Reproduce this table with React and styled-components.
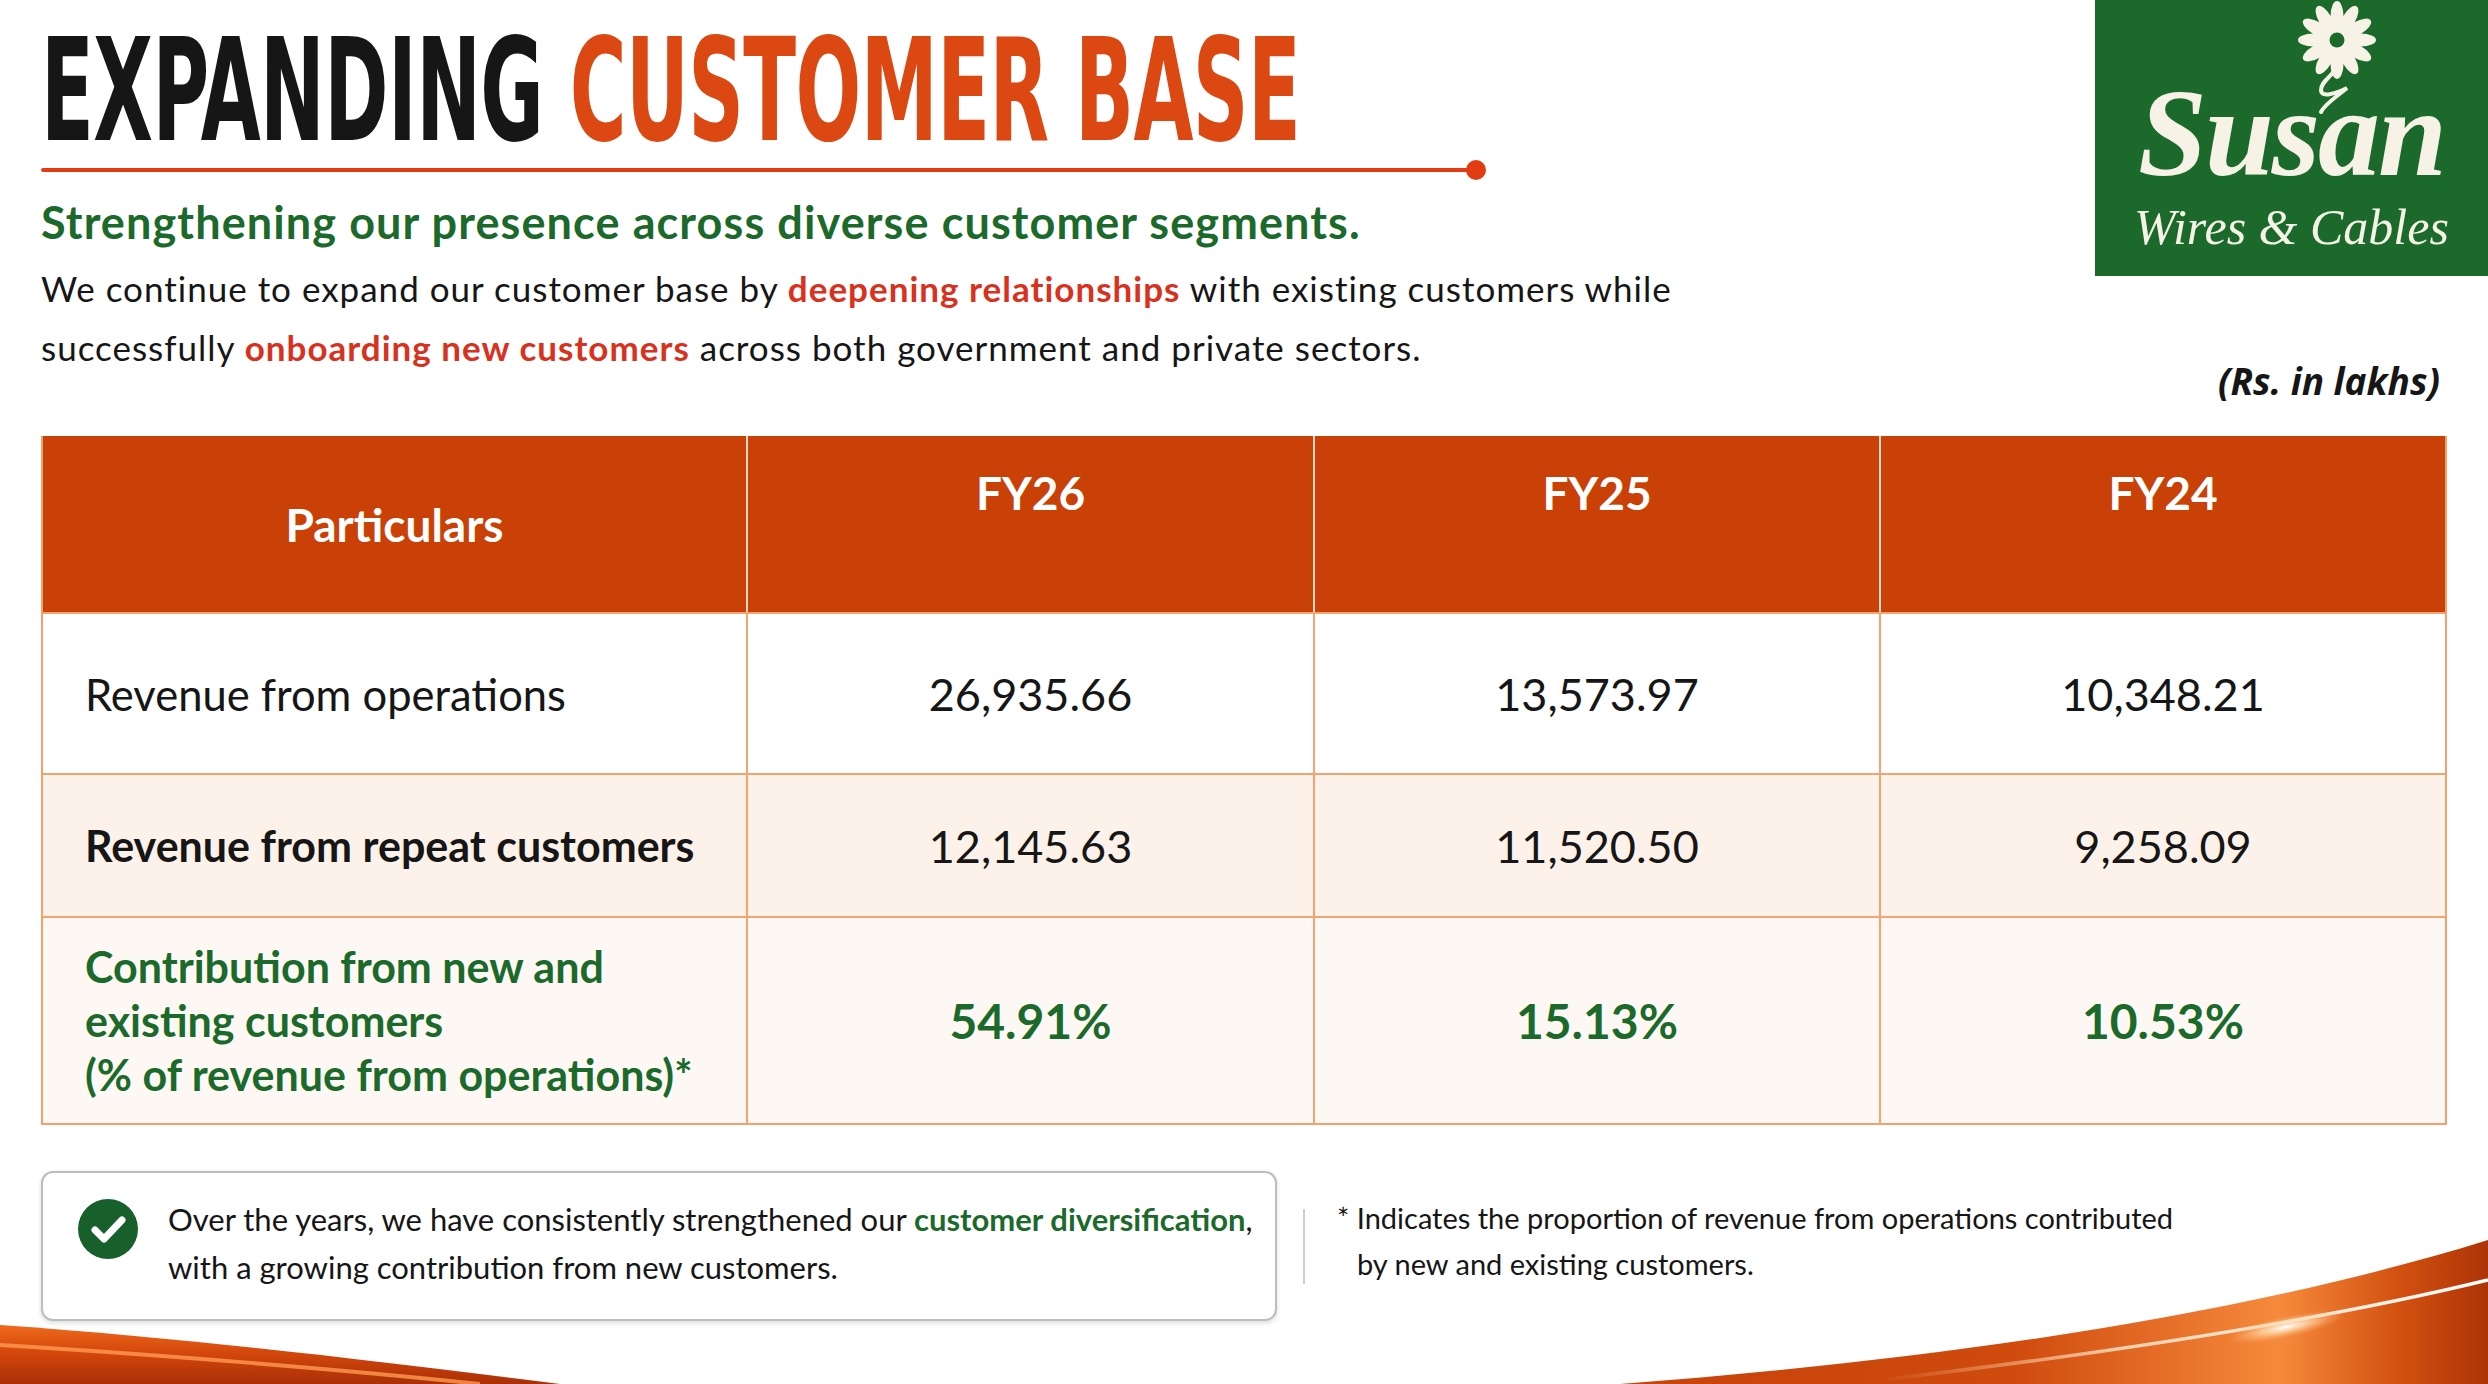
import React from 'react';
import styled, { createGlobalStyle } from 'styled-components';

const GREEN = '#1c6a2b';
const ORANGE = '#dc4812';
const RED = '#d8321e';
const INK = '#161616';

const GlobalStyle = createGlobalStyle`
  html, body {
    margin: 0;
    padding: 0;
    background: #ffffff;
  }
  body {
    font-family: Lato, 'Open Sans', 'Liberation Sans', sans-serif;
    color: ${INK};
  }
`;

const Page = styled.div`
  position: relative;
  width: 2488px;
  height: 1384px;
  overflow: hidden;
  box-sizing: border-box;
  padding: 0 41px;
  background: #ffffff;
`;

const Header = styled.header`
  display: flex;
  justify-content: space-between;
  align-items: flex-start;
  margin-right: -41px;
`;

const TitleBlock = styled.div`
  display: flex;
  flex-direction: column;
  padding-top: 22px;
`;

const Title = styled.h1`
  margin: 0;
  width: 1260px;
  font-family: 'Liberation Sans Narrow', 'DejaVu Sans Condensed', 'Liberation Sans', sans-serif;
  font-stretch: condensed;
  font-weight: 700;
  font-size: 143px;
  line-height: 137px;
  white-space: nowrap;
  letter-spacing: -1px;
  transform: scaleX(0.602);
  transform-origin: left center;
  color: ${INK};
`;

const Accent = styled.span`
  color: ${props => props.$color || ORANGE};
`;

const Rule = styled.div`
  position: relative;
  width: 1435px;
  height: 4px;
  margin-top: 9px;
  background: #e23c12;
  border-radius: 2px;

  &::after {
    content: '';
    position: absolute;
    right: -10px;
    top: -8px;
    width: 20px;
    height: 20px;
    border-radius: 50%;
    background: #e23c12;
  }
`;

const Subtitle = styled.h2`
  margin: 25px 0 0;
  font-family: Lato, 'Open Sans', sans-serif;
  font-weight: 700;
  font-size: 45px;
  line-height: 50px;
  letter-spacing: 1.1px;
  color: ${GREEN};
`;

const Body = styled.p`
  margin: 12px 0 0;
  font-family: Lato, 'Open Sans', sans-serif;
  font-size: 35px;
  line-height: 59px;
  letter-spacing: 1px;
  color: ${INK};
`;

const Strong = styled.strong`
  font-weight: 700;
  color: ${props => props.$color || RED};
`;

const RightCol = styled.div`
  display: flex;
  flex-direction: column;
  align-items: flex-end;
`;

const Logo = styled.div`
  position: relative;
  width: 393px;
  height: 276px;
  background: #1b6a2b;
  color: #f6f3e6;
  display: flex;
  flex-direction: column;
  align-items: center;
  box-sizing: border-box;
  padding-top: 74px;
`;

const Flower = styled.svg`
  position: absolute;
  left: 196px;
  top: 0;
`;

const LogoName = styled.div`
  font-family: 'Liberation Serif', 'DejaVu Serif', serif;
  font-style: italic;
  font-weight: 700;
  font-size: 124px;
  line-height: 120px;
  letter-spacing: -2px;
`;

const LogoTag = styled.div`
  margin-top: 5px;
  font-family: 'Liberation Serif', 'DejaVu Serif', serif;
  font-style: italic;
  font-size: 50px;
  line-height: 56px;
`;

const Units = styled.div`
  margin: 82px 48px 0 0;
  font-family: 'Open Sans', Lato, sans-serif;
  font-style: italic;
  font-weight: 700;
  font-size: 37px;
  line-height: 46px;
  color: ${INK};
`;

const Table = styled.div`
  display: grid;
  grid-template-columns: 703px 567px 566px 1fr;
  grid-template-rows: 176px 161px 143px 207px;
  margin-top: 32px;
  border: 2px solid #f2a06e;
  border-top: none;
`;

const HeadCell = styled.div`
  display: flex;
  justify-content: center;
  align-items: ${props => (props.$top ? 'flex-start' : 'center')};
  padding-top: ${props => (props.$top ? '30px' : '0')};
  background: #c94106;
  border-left: ${props => (props.$first ? 'none' : '2px solid #f6d6c6')};
  font-family: Lato, 'Open Sans', sans-serif;
  font-weight: 700;
  font-size: 46px;
  line-height: 53px;
  color: #ffffff;
`;

const tones = {
  white: '#ffffff',
  cream: '#fdf2e9',
  light: '#fdf8f3',
};

const Cell = styled.div`
  display: flex;
  align-items: center;
  justify-content: ${props => (props.$label ? 'flex-start' : 'center')};
  padding-left: ${props => (props.$label ? '42px' : '0')};
  background: ${props => tones[props.$tone] || '#ffffff'};
  border-top: 2px solid #f3a470;
  border-left: ${props => (props.$first ? 'none' : '2px solid #f3a470')};
  font-family: Lato, 'Open Sans', sans-serif;
  font-size: ${props => props.$size || '45px'};
  font-weight: ${props => (props.$bold ? 700 : 400)};
  line-height: ${props => props.$lh || '54px'};
  color: ${props => (props.$green ? GREEN : INK)};
`;

const Footer = styled.div`
  display: flex;
  align-items: center;
  margin-top: 46px;
`;

const NoteCard = styled.div`
  display: flex;
  align-items: center;
  gap: 30px;
  width: 1236px;
  height: 150px;
  box-sizing: border-box;
  padding: 0 0 6px 35px;
  border: 2px solid #bdbdbd;
  border-radius: 12px;
  box-shadow: 0 2px 5px rgba(0, 0, 0, 0.14);
  background: #ffffff;
`;

const Badge = styled.svg`
  flex: none;
  margin-bottom: 28px;
`;

const NoteText = styled.div`
  font-family: Lato, 'Open Sans', sans-serif;
  font-size: 31px;
  line-height: 48px;
  color: ${INK};
`;

const Divider = styled.div`
  width: 2px;
  height: 75px;
  margin: 0 32px 0 26px;
  background: #cfcfcf;
`;

const Footnote = styled.div`
  margin-bottom: 10px;
  padding-left: 20px;
  text-indent: -20px;
  font-family: Lato, 'Open Sans', sans-serif;
  font-size: 29px;
  line-height: 46px;
  color: ${INK};
`;

const Swoosh = styled.svg`
  position: absolute;
  left: 0;
  bottom: 0;
  display: block;
`;

const CheckBadge = () => (
  <Badge width="60" height="60" viewBox="0 0 60 60">
    <circle cx="30" cy="30" r="30" fill="#17602c" />
    <path d="M17 31 L26 40 L44 21" fill="none" stroke="#ffffff" strokeWidth="7" strokeLinecap="round" strokeLinejoin="round" />
  </Badge>
);

const FlowerMark = () => {
  const petals = Array.from({ length: 12 }, (_, i) => i * 30);
  return (
    <Flower width="92" height="130" viewBox="0 0 92 130">
      <g transform="translate(46 40)">
        {petals.map(a => (
          <ellipse key={a} cx="0" cy="-24" rx="6.5" ry="15" fill="#f6f3e6" transform={`rotate(${a})`} />
        ))}
        <circle r="12" fill="#f6f3e6" />
        <circle r="7.5" fill="#1b6a2b" />
      </g>
      <path d="M46 64 C44 76 30 80 30 90 C30 98 44 94 56 88 C44 98 34 104 30 112" fill="none" stroke="#f6f3e6" strokeWidth="4" strokeLinecap="round" />
    </Flower>
  );
};

const rows = [
  { label: 'Revenue from operations', tone: 'white', values: ['26,935.66', '13,573.97', '10,348.21'] },
  { label: 'Revenue from repeat customers', tone: 'cream', bold: true, values: ['12,145.63', '11,520.50', '9,258.09'] },
];

export default function App() {
  return (
    <>
      <GlobalStyle />
      <Page>
        <Header>
          <TitleBlock>
            <Title>
              EXPANDING <Accent>CUSTOMER BASE</Accent>
            </Title>
            <Rule />
            <Subtitle>Strengthening our presence across diverse customer segments.</Subtitle>
            <Body>
              We continue to expand our customer base by <Strong>deepening relationships</Strong> with existing customers while
              <br />
              successfully <Strong>onboarding new customers</Strong> across both government and private sectors.
            </Body>
          </TitleBlock>
          <RightCol>
            <Logo>
              <FlowerMark />
              <LogoName>Susan</LogoName>
              <LogoTag>Wires &amp; Cables</LogoTag>
            </Logo>
            <Units>(Rs. in lakhs)</Units>
          </RightCol>
        </Header>

        <Table>
          <HeadCell $first>Particulars</HeadCell>
          <HeadCell $top>FY26</HeadCell>
          <HeadCell $top>FY25</HeadCell>
          <HeadCell $top>FY24</HeadCell>

          {rows.map(row => (
            <React.Fragment key={row.label}>
              <Cell $label $first $tone={row.tone} $bold={row.bold} $size={row.bold ? '43px' : '43.5px'}>
                {row.label}
              </Cell>
              {row.values.map(v => (
                <Cell key={v} $tone={row.tone}>{v}</Cell>
              ))}
            </React.Fragment>
          ))}

          <Cell $label $first $tone="light" $bold $green $size="43px" $lh="54px">
            Contribution from new and
            <br />
            existing customers
            <br />
            (% of revenue from operations)*
          </Cell>
          {['54.91%', '15.13%', '10.53%'].map(v => (
            <Cell key={v} $tone="light" $bold $green $size="48px">{v}</Cell>
          ))}
        </Table>

        <Footer>
          <NoteCard>
            <CheckBadge />
            <NoteText>
              Over the years, we have consistently strengthened our <Strong $color={GREEN}>customer diversification</Strong>,
              <br />
              with a growing contribution from new customers.
            </NoteText>
          </NoteCard>
          <Divider />
          <Footnote>
            * Indicates the proportion of revenue from operations contributed
            <br />
            by new and existing customers.
          </Footnote>
        </Footer>

        <Swoosh width="2488" height="150" viewBox="0 0 2488 150">
          <defs>
            <linearGradient id="swL" x1="0" y1="0" x2="0" y2="1">
              <stop offset="0" stopColor="#ee6a1c" />
              <stop offset="0.45" stopColor="#d5480c" />
              <stop offset="1" stopColor="#a92f06" />
            </linearGradient>
            <linearGradient id="swR" x1="1620" y1="0" x2="2488" y2="0" gradientUnits="userSpaceOnUse">
              <stop offset="0" stopColor="#c8430a" />
              <stop offset="0.45" stopColor="#cf4a0d" />
              <stop offset="0.76" stopColor="#f68a3c" />
              <stop offset="0.9" stopColor="#d2500f" />
              <stop offset="1" stopColor="#ad3407" />
            </linearGradient>
            <radialGradient id="glow" cx="0.5" cy="0.5" r="0.5">
              <stop offset="0" stopColor="#ffffff" stopOpacity="1" />
              <stop offset="0.4" stopColor="#ffe2b8" stopOpacity="0.7" />
              <stop offset="1" stopColor="#ffb070" stopOpacity="0" />
            </radialGradient>
            <linearGradient id="shine" x1="1880" y1="0" x2="2488" y2="0" gradientUnits="userSpaceOnUse">
              <stop offset="0" stopColor="#ffd9b0" stopOpacity="0" />
              <stop offset="0.4" stopColor="#ffe9d0" stopOpacity="0.8" />
              <stop offset="1" stopColor="#ffffff" stopOpacity="1" />
            </linearGradient>
          </defs>
          <path d="M0 91 C200 105 400 130 560 150 L0 150 Z" fill="url(#swL)" />
          <path d="M0 111 C150 120 350 136 480 150" fill="none" stroke="#ff9a52" strokeWidth="4" opacity="0.8" />
          <path d="M1620 150 C1950 125 2250 80 2488 6 L2488 150 Z" fill="url(#swR)" />
          <path d="M1880 146 C2050 126 2300 92 2488 46" fill="none" stroke="url(#shine)" strokeWidth="3.5" />
          <ellipse cx="2286" cy="93" rx="60" ry="11" fill="url(#glow)" transform="rotate(-12 2286 93)" />
        </Swoosh>
      </Page>
    </>
  );
}
